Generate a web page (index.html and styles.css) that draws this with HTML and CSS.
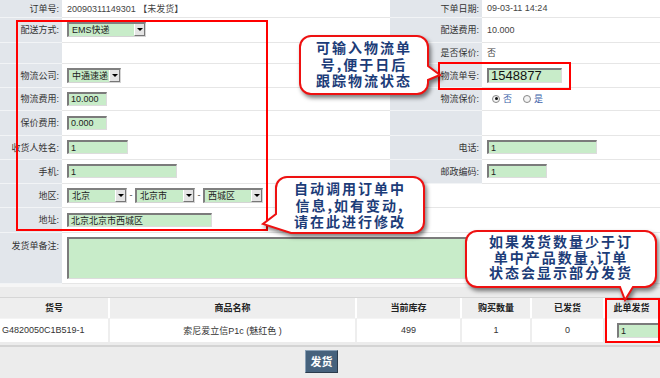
FILE: index.html
```html
<!DOCTYPE html>
<html lang="zh-CN">
<head>
  <meta charset="UTF-8" />
  <title>订单发货</title>
  <link rel="stylesheet" href="styles.css">
</head>
<body>
  <div class="page">
    <table class="form">
      <colgroup>
        <col class="c-lab"><col class="c-val"><col class="c-lab2"><col class="c-val2">
      </colgroup>
      <tr class="r1"><th>订单号:</th><td>20090311149301 【未发货】</td><th>下单日期:</th><td>09-03-11 14:24</td></tr>
      <tr class="r2"><th>配送方式:</th><td><span class="select w-ems"><span class="opt">EMS快递</span><i class="arrow"></i></span></td><th>配送费用:</th><td>10.000</td></tr>
      <tr class="r3"><th></th><td></td><th>是否保价:</th><td>否</td></tr>
      <tr class="r4"><th>物流公司:</th><td><span class="select w-wl"><span class="opt">中通速递</span><i class="arrow"></i></span></td><th>物流单号:</th><td><input class="field big" value="1548877"></td></tr>
      <tr class="r5"><th>物流费用:</th><td><input class="field w40" value="10.000"></td><th>物流保价:</th><td><span class="radio on"></span><span class="rlabel">否</span><span class="radio"></span><span class="rlabel">是</span></td></tr>
      <tr class="r6"><th>保价费用:</th><td><input class="field w40" value="0.000"></td><th></th><td></td></tr>
      <tr class="r7"><th>收货人姓名:</th><td><input class="field w61" value="1"></td><th>电话:</th><td><input class="field w110" value="1"></td></tr>
      <tr class="r8"><th>手机:</th><td><input class="field w110" value="1"></td><th>邮政编码:</th><td><input class="field w60" value="1"></td></tr>
      <tr class="r9"><th>地区:</th><td colspan="3">
        <span class="select w-area"><span class="opt">北京</span><i class="arrow"></i></span><span class="dash">-</span><span class="select w-area"><span class="opt">北京市</span><i class="arrow"></i></span><span class="dash">-</span><span class="select w-area"><span class="opt">西城区</span><i class="arrow"></i></span>
      </td></tr>
      <tr class="r10"><th>地址:</th><td colspan="3"><input class="field w145" value="北京北京市西城区"></td></tr>
      <tr class="r11"><th class="top">发货单备注:</th><td colspan="3"><textarea class="field note"></textarea></td></tr>
    </table>

    <div class="goods-wrap">
      <table class="goods">
        <colgroup>
          <col class="g1"><col class="g2"><col class="g3"><col class="g4"><col class="g5"><col class="g6">
        </colgroup>
        <tr><th>货号</th><th>商品名称</th><th>当前库存</th><th>购买数量</th><th>已发货</th><th>此单发货</th></tr>
        <tr><td class="sku">G4820050C1B519-1</td><td>索尼爱立信P1c (魅红色 )</td><td>499</td><td>1</td><td>0</td><td class="qty-cell"><input class="field qty" value="1"></td></tr>
      </table>
    </div>

    <div class="actions"><button class="btn">发货</button></div>

    <!-- annotations -->
    <div class="mark mark-form"></div>
    <div class="mark mark-no"></div>
    <div class="mark mark-qty"></div>

    <div class="callout callout-no">
      <svg width="130" height="60"><path d="M12 1H118A11 11 0 0 1 129 12V31L141 40L129 45V48A11 11 0 0 1 118 59H12A11 11 0 0 1 1 48V12A11 11 0 0 1 12 1Z"/></svg>
      <p class="callout-text">可输入物流单<br>号,便于日后<br>跟踪物流状态</p>
    </div>
    <div class="callout callout-info">
      <svg width="150" height="58"><path d="M12 1H138A11 11 0 0 1 149 12V46A11 11 0 0 1 138 57H16L-12 48L1 38V12A11 11 0 0 1 12 1Z"/></svg>
      <p class="callout-text">自动调用订单中<br>信息,如有变动,<br>请在此进行修改</p>
    </div>
    <div class="callout callout-qty">
      <svg width="192" height="58"><path d="M12 1H180A11 11 0 0 1 191 12V46A11 11 0 0 1 180 57H168L160 70L155 57H12A11 11 0 0 1 1 46V12A11 11 0 0 1 12 1Z"/></svg>
      <p class="callout-text tight">如果发货数量少于订<br>单中产品数量,订单<br>状态会显示部分发货</p>
    </div>
  </div>
</body>
</html>
```

FILE: styles.css
```css
body {
  margin: 0;
  font-family: "Liberation Sans", "Noto Sans CJK SC", sans-serif;
  font-size: 9px;
  color: #444;
  background: #ececec;
}
.page {
  position: relative;
  width: 660px;
  height: 378px;
  overflow: hidden;
  background: #ececec;
}

/* order form */
.form {
  width: 660px;
  border-collapse: collapse;
  table-layout: fixed;
  background: #fff;
}
.c-lab { width: 62px; }
.c-val { width: 328px; }
.c-lab2 { width: 92px; }
.c-val2 { width: 178px; }
.form th {
  background: #e2e6eb;
  font-weight: normal;
  text-align: right;
  padding: 0 3px 0 0;
  color: #333;
  border-bottom: 1px solid #f2f4f6;
  white-space: nowrap;
}
.form th.top { vertical-align: top; padding-top: 6px; }
.form td {
  padding: 0 0 0 5px;
  border-bottom: 1px solid #e6e6e6;
  white-space: nowrap;
}
.r1 { height: 17px; }
.r2 { height: 25px; }
.r3 { height: 21px; }
.r4 { height: 24px; }
.r5 { height: 23px; }
.r6 { height: 25px; }
.r7, .r8, .r9 { height: 24px; }
.r10 { height: 25px; }
.r11 { height: 51px; }

.field {
  box-sizing: border-box;
  height: 14px;
  margin: 0;
  padding: 0 2px;
  vertical-align: middle;
  background: #c8ecc9;
  border-top: 2px solid #7b7b7b;
  border-left: 2px solid #7b7b7b;
  border-right: 1px solid #dcdcdc;
  border-bottom: 1px solid #dcdcdc;
  font: 9px "Liberation Sans", "Noto Sans CJK SC", sans-serif;
  color: #222;
}
.w40 { width: 40px; }
.w60 { width: 60px; }
.w61 { width: 61px; }
.w110 { width: 110px; }
.w145 { width: 145px; }
.big {
  width: 75px;
  height: 15px;
  font-size: 13px;
  line-height: 1;
  color: #111;
}
.note {
  display: block;
  width: 560px;
  height: 42px;
  resize: none;
  margin-top: 1px;
}

.select {
  display: inline-flex;
  box-sizing: border-box;
  height: 15px;
  vertical-align: middle;
  background: #c8ecc9;
  border-top: 2px solid #808080;
  border-left: 2px solid #808080;
  border-right: 1px solid #d4d4d4;
  border-bottom: 1px solid #d4d4d4;
  color: #222;
}
.select .opt {
  flex: 1;
  padding-left: 3px;
  line-height: 12px;
}
.select .arrow {
  position: relative;
  width: 9px;
  background: #e4e4e4;
  border-left: 1px solid #fff;
  border-right: 1px solid #777;
  border-bottom: 1px solid #777;
}
.select .arrow::after {
  content: "";
  position: absolute;
  left: 2px;
  top: 4px;
  border: 3px solid transparent;
  border-top: 3px solid #000;
  border-bottom: 0;
}
.w-ems { width: 79px; }
.w-wl { width: 54px; }
.w-area { width: 60px; }
.dash {
  display: inline-block;
  width: 8px;
  text-align: center;
  vertical-align: middle;
}

.radio {
  display: inline-block;
  position: relative;
  box-sizing: border-box;
  width: 8px;
  height: 8px;
  margin-left: 5px;
  vertical-align: middle;
  border-radius: 50%;
  border: 1px solid #888;
  background: #f4f4f4;
}
.radio.on::after {
  content: "";
  position: absolute;
  left: 1.5px;
  top: 1.5px;
  width: 3px;
  height: 3px;
  border-radius: 50%;
  background: #111;
}
.rlabel {
  margin: 0 6px 0 3px;
  color: #3a5fa8;
  vertical-align: middle;
}

/* goods */
.goods-wrap {
  padding-top: 10px;
  border-top: 3px solid #f6f6f6;
}
.goods {
  width: 660px;
  border-collapse: separate;
  border-spacing: 0;
  table-layout: fixed;
  border-top: 1px solid #d6d6d6;
}
.g1 { width: 110px; }
.g2 { width: 247px; }
.g3 { width: 105px; }
.g4 { width: 70px; }
.g5 { width: 73px; }
.g6 { width: 55px; }
.goods th {
  height: 20px;
  padding: 0;
  background: #eeeeee;
  border-right: 2px solid #fff;
  font-weight: bold;
  color: #222;
}
.goods td {
  height: 23px;
  padding: 0;
  background: #fff;
  border-right: 2px solid #eeeeee;
  border-top: 1px solid #f4f4f4;
  text-align: center;
  color: #333;
}
.goods td.sku { text-align: left; padding-left: 2px; }
.goods td.qty-cell { text-align: left; padding-left: 12px; }
.qty { width: 43px; height: 15px; }

.actions {
  margin-top: 3px;
  border-top: 2px solid #d4d4d4;
  padding: 3px 17px 0 0;
  text-align: center;
}
.btn {
  width: 33px;
  height: 23px;
  padding: 0;
  background: #46627d;
  border: 1px solid #2b3b4c;
  border-top-color: #8aa0b5;
  border-left-color: #8aa0b5;
  color: #fff;
  font: bold 11px "Noto Sans CJK SC", sans-serif;
}

/* annotations */
.mark {
  position: absolute;
  box-sizing: border-box;
  border: 2px solid #ff0000;
}
.mark-form { left: 16px; top: 20px; width: 252px; height: 211px; }
.mark-no { left: 438px; top: 62px; width: 133px; height: 28px; }
.mark-qty { left: 605px; top: 298px; width: 55px; height: 45px; }

.callout { position: absolute; }
.callout svg {
  position: absolute;
  left: 0;
  top: 0;
  overflow: visible;
  filter: drop-shadow(2px 3px 2px rgba(0, 0, 0, 0.5));
}
.callout path {
  fill: #fff;
  stroke: #ee1111;
  stroke-width: 2;
}
.callout-text {
  position: relative;
  margin: 0;
  padding-top: 4px;
  text-align: center;
  font: bold 14px/16.5px "Noto Sans CJK SC", sans-serif;
  letter-spacing: 2px;
  color: #1c3c78;
}
.callout-text.tight { line-height: 15.5px; }
.callout-no { left: 299px; top: 35px; width: 130px; height: 60px; }
.callout-info { left: 275px; top: 176px; width: 150px; height: 58px; }
.callout-qty { left: 465px; top: 230px; width: 192px; height: 58px; }
```
